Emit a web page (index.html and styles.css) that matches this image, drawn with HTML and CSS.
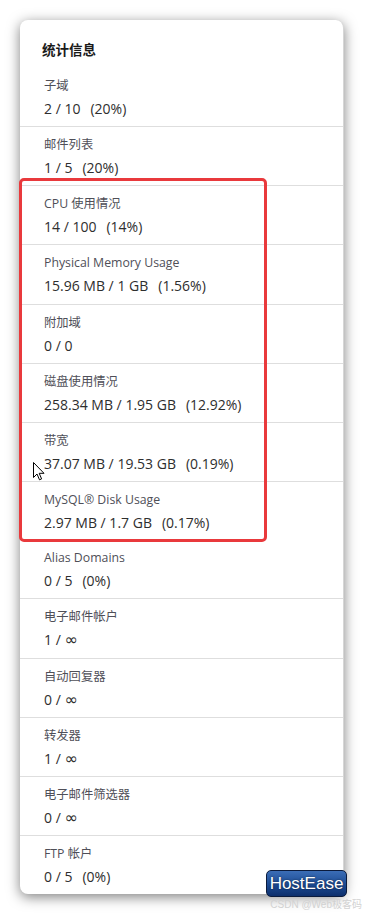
FILE: index.html
```html
<!DOCTYPE html>
<html lang="zh-CN">
<head>
    <meta charset="UTF-8">
    <meta name="viewport" content="width=device-width, initial-scale=1.0">
    <title>统计信息</title>
    <link rel="stylesheet" href="styles.css">
</head>
<body>

    <!-- 统计信息 -->
    <div class="stats-card">
        <h3 class="stats-title">统计信息</h3>

        <div class="stat-row"><div class="stat-label">子域</div><div class="stat-value">2 / 10<span class="pct">(20%)</span></div></div>
        <div class="stat-row"><div class="stat-label">邮件列表</div><div class="stat-value">1 / 5<span class="pct">(20%)</span></div></div>

        <div class="highlight">
            <div class="stat-row"><div class="stat-label">CPU 使用情况</div><div class="stat-value">14 / 100<span class="pct">(14%)</span></div></div>
            <div class="stat-row"><div class="stat-label">Physical Memory Usage</div><div class="stat-value">15.96 MB / 1 GB<span class="pct">(1.56%)</span></div></div>
            <div class="stat-row"><div class="stat-label">附加域</div><div class="stat-value">0 / 0</div></div>
            <div class="stat-row"><div class="stat-label">磁盘使用情况</div><div class="stat-value">258.34 MB / 1.95 GB<span class="pct">(12.92%)</span></div></div>
            <div class="stat-row"><div class="stat-label">带宽</div><div class="stat-value">37.07 MB / 19.53 GB<span class="pct">(0.19%)</span></div></div>
            <div class="stat-row"><div class="stat-label">MySQL® Disk Usage</div><div class="stat-value">2.97 MB / 1.7 GB<span class="pct">(0.17%)</span></div></div>
        </div>

        <div class="stat-row"><div class="stat-label">Alias Domains</div><div class="stat-value">0 / 5<span class="pct">(0%)</span></div></div>
        <div class="stat-row"><div class="stat-label">电子邮件帐户</div><div class="stat-value">1 / <span class="inf">∞</span></div></div>
        <div class="stat-row"><div class="stat-label">自动回复器</div><div class="stat-value">0 / <span class="inf">∞</span></div></div>
        <div class="stat-row"><div class="stat-label">转发器</div><div class="stat-value">1 / <span class="inf">∞</span></div></div>
        <div class="stat-row"><div class="stat-label">电子邮件筛选器</div><div class="stat-value">0 / <span class="inf">∞</span></div></div>
        <div class="stat-row"><div class="stat-label">FTP 帐户</div><div class="stat-value">0 / 5<span class="pct">(0%)</span></div></div>
    </div>

    <!-- 鼠标指针 -->
    <svg class="cursor" width="12" height="19" viewBox="0 0 12 19">
        <path d="M0.5 0.5 L0.5 15.5 L4 12 L6.5 17.8 L8.6 16.9 L6.2 11.3 L11 11.3 Z" fill="#fff" stroke="#000" stroke-width="1" stroke-linejoin="round"/>
    </svg>

    <div class="badge">HostEase</div>
    <div class="watermark">CSDN @Web极客码</div>

</body>
</html>
```

FILE: styles.css
```css
*, *::before, *::after { margin: 0; padding: 0; box-sizing: border-box; }
body {
    width: 367px;
    height: 918px;
    background: #ffffff;
    position: relative;
    overflow: hidden;
    font-family: "Open Sans", "Noto Sans CJK SC", sans-serif;
}

.stats-card {
    margin: 20px 23px 0 20px;
    width: 324px;
    background: #fff;
    border-radius: 8px;
    border-right: 1px solid #d6d6d6;
    box-shadow: 0 3px 13px rgba(0, 0, 0, 0.5);
    padding-top: 20px;
}

.stats-title {
    font-size: 13.5px;
    font-weight: bold;
    color: #1a1a1a;
    line-height: 20px;
    padding-left: 22px;
    margin-bottom: 7.8px;
}

.stat-row {
    padding: 8px 0 6.2px 24px;
    border-bottom: 1px solid #dedede;
}

.stat-row:last-child { border-bottom: none; }

.stat-label {
    font-size: 12.3px;
    line-height: 20px;
    color: #4f4f58;
}

.stat-value {
    font-size: 14px;
    line-height: 22px;
    margin-top: 2px;
    color: #2e2e2e;
}

.pct { margin-left: 10px; }

.inf {
    font-family: "DejaVu Sans", sans-serif;
    font-size: 16px;
    line-height: 1;
}

/* 红框标注 */
.highlight { position: relative; }

.highlight::after {
    content: '';
    position: absolute;
    left: -1px;
    top: -8px;
    width: 248px;
    bottom: -1.5px;
    border: 3px solid #e9393c;
    border-radius: 5px;
    pointer-events: none;
}

.cursor {
    position: absolute;
    left: 33px;
    top: 462px;
}

.badge {
    position: absolute;
    left: 266px;
    top: 870px;
    width: 81px;
    height: 27px;
    border: 1px solid #0b1b3c;
    border-radius: 5px;
    background: linear-gradient(#3b6db6, #1c4b93 55%, #0d2f6c);
    color: #fff;
    font-family: "Liberation Sans", Arial, sans-serif;
    font-size: 17px;
    line-height: 25px;
    text-align: center;
    text-shadow: 0 0 2px rgba(0, 0, 0, 0.6);
}

.watermark {
    position: absolute;
    right: 5px;
    top: 899px;
    font-family: "Liberation Sans", "Noto Sans CJK SC", sans-serif;
    font-size: 10px;
    line-height: 12px;
    color: #d2d2d2;
}
```
